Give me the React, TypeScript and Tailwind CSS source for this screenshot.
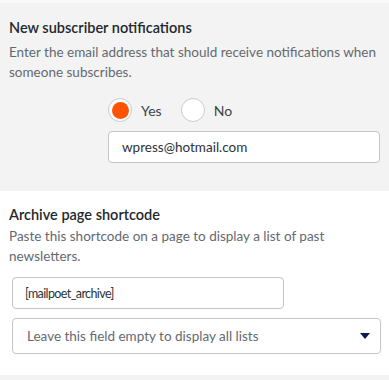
import React, { useState } from "react";

const FONT = "font-['Segoe_UI','Lato','Noto_Sans',sans-serif]";

function Radio({ checked, label, onClick }: { checked: boolean; label: string; onClick: () => void }) {
  return (
    <label className="flex items-center gap-[9px] cursor-pointer" onClick={onClick}>
      <span className="w-6 h-6 rounded-full border border-[#c9cbcf] bg-white flex items-center justify-center">
        {checked && <span className="w-[17px] h-[17px] rounded-full bg-[#fe5301]" />}
      </span>
      <span className="text-[14px] text-[#3c434a]">{label}</span>
    </label>
  );
}

export default function App() {
  const [notify, setNotify] = useState(true);

  return (
    <div className={`w-[389px] h-[380px] bg-white overflow-hidden ${FONT}`}>
      {/* NEW SUBSCRIBER NOTIFICATIONS */}
      <section className="bg-[#f3f3f3] border-t-[3px] border-[#f8f8f8] pl-[9px] pr-2 pt-[15px] h-[191px]">
        <h3 className="text-[14.5px] leading-5 font-semibold text-[#23282d]">New subscriber notifications</h3>
        <p className="text-[13.5px] leading-5 text-[#646970] mt-[4px]">
          Enter the email address that should receive notifications when someone subscribes.
        </p>

        <div className="ml-[99px] mt-[16px] flex flex-col">
          <div className="flex items-center gap-[19px] h-6">
            <Radio checked={notify} label="Yes" onClick={() => setNotify(true)} />
            <Radio checked={!notify} label="No" onClick={() => setNotify(false)} />
          </div>
          <input
            type="text"
            defaultValue="wpress@hotmail.com"
            className="mt-[9px] w-[272px] h-[32px] bg-white border border-[#c3c4c7] rounded-[4px] px-[13px] text-[13.5px] text-[#2c3338] outline-none"
          />
        </div>
      </section>

      {/* ARCHIVE PAGE SHORTCODE */}
      <section className="pl-[9px] pr-2 pt-[14px]">
        <h3 className="text-[14.5px] leading-5 font-semibold text-[#23282d]">Archive page shortcode</h3>
        <p className="text-[13.5px] leading-5 text-[#646970] mt-[1px] pr-12">
          Paste this shortcode on a page to display a list of past newsletters.
        </p>

        <div className="ml-[3px] mt-[11px] flex flex-col gap-[9px]">
          <input
            type="text"
            readOnly
            value="[mailpoet_archive]"
            className="w-[272px] h-[32px] bg-white border border-[#c3c4c7] rounded-[4px] px-3 text-[12.5px] tracking-[-0.6px] text-[#2c3338] outline-none"
          />
          <div className="w-[369px] h-[36px] bg-white border border-[#c3c4c7] rounded-[4px] pl-[14px] pr-[10px] flex items-center justify-between">
            <span className="text-[13.5px] text-[#646970]">Leave this field empty to display all lists</span>
            <svg width="10" height="6" viewBox="0 0 10 6">
              <path d="M0 0 H10 L5 6 Z" fill="#0f1a4f" />
            </svg>
          </div>
        </div>
      </section>

      <div className="mt-[21px] h-2 bg-[#f3f3f3]" />
    </div>
  );
}
